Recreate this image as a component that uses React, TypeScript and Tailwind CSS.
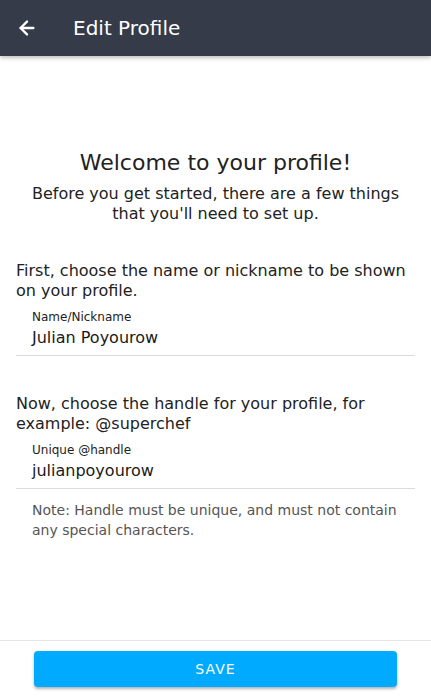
import { ArrowLeft } from "lucide-react";

const Field = ({ label, value }: { label: string; value: string }) => {
  return (
    <div className="border-b border-[#dcdcdc] px-4 pt-[7px] pb-[4px]">
      <div className="text-[12px] leading-[15px] text-[#222]">{label}</div>
      <div className="text-[16px] leading-[26px] text-[#1a1a1a]">{value}</div>
    </div>
  );
};

export default function App() {
  return (
    <div
      className="flex h-[697px] w-full flex-col bg-white"
      style={{ fontFamily: '"DejaVu Sans", sans-serif' }}
    >
      <header className="z-10 flex h-14 shrink-0 items-center bg-[#363b4a] px-4 text-white shadow-[0_2px_4px_rgba(0,0,0,0.25)]">
        <ArrowLeft size={22} strokeWidth={2.5} />
        <h1 className="ml-[35px] text-[20px]">Edit Profile</h1>
      </header>

      <main className="flex-1 px-4 pt-[92px]">
        <div className="text-center">
          <h2 className="text-[22px] leading-[30px] text-[#222]">Welcome to your profile!</h2>
          <p className="mt-[6px] text-[16px] leading-[20px] text-[#222]">
            Before you get started, there are a few things
            <br />
            that you'll need to set up.
          </p>
        </div>

        <p className="mt-[37px] text-[16px] leading-[20px] text-[#222]">
          First, choose the name or nickname to be shown on your profile.
        </p>
        <div className="mt-[2px]">
          <Field label="Name/Nickname" value="Julian Poyourow" />
        </div>

        <p className="mt-[38px] text-[16px] leading-[20px] text-[#222]">
          Now, choose the handle for your profile, for example: @superchef
        </p>
        <div className="mt-[2px]">
          <Field label="Unique @handle" value="julianpoyourow" />
        </div>
        <p className="mt-[11px] px-4 text-[14px] leading-[20px] text-[#555]">
          Note: Handle must be unique, and must not contain any special characters.
        </p>
      </main>

      <footer className="shrink-0 border-t border-[#e6e6e6] px-[34px] pt-[10px] pb-[10px]">
        <button className="h-9 w-full rounded-[4px] bg-[#00aaff] text-[14px] tracking-[1px] text-white shadow-[0_2px_3px_rgba(0,0,0,0.3)]">
          SAVE
        </button>
      </footer>
    </div>
  );
}
